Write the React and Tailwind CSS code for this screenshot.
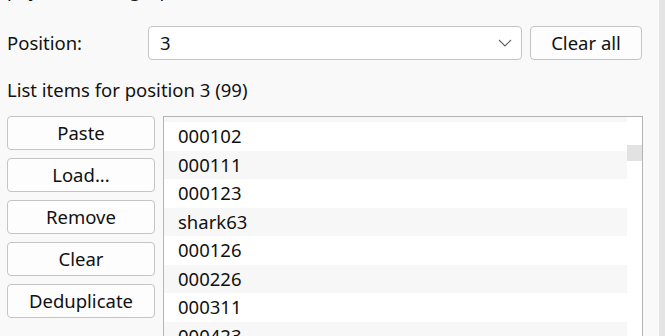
const ITEMS = ["000102", "000111", "000123", "shark63", "000126", "000226", "000311", "000423"]

const BUTTONS = ["Paste", "Load...", "Remove", "Clear", "Deduplicate"]

function App() {
  return (
    <div
      className="flex w-[665px] h-[336px] overflow-hidden bg-[#f9f9f9] text-[18.5px] text-[#111]"
      style={{ fontFamily: '"Noto Sans", "Open Sans", sans-serif' }}
    >
      <div className="flex-1 flex flex-col px-[7px]">
        {/* cut-off description line */}
        <div className="shrink-0 -mt-[20px] h-[20px] leading-[19.5px] whitespace-nowrap">
          payload settings, position
        </div>

        {/* Position row */}
        <div className="shrink-0 mt-[26px] flex items-center h-[34px]">
          <div className="w-[141px] leading-[26px]">Position:</div>
          <div className="w-[374px] h-[34px] flex items-center justify-between bg-white border border-[#c4c4c4] rounded-[4px] pl-[11px] pr-[9px]">
            <span className="leading-[26px]">3</span>
            <svg width="14" height="8" viewBox="0 0 14 8" fill="none">
              <path d="M1 1L7 7L13 1" stroke="#5f5f5f" strokeWidth="1.1" />
            </svg>
          </div>
          <button className="ml-[8px] w-[112px] h-[34px] bg-[#fdfdfd] border border-[#c4c4c4] rounded-[4px] leading-[26px]">
            Clear all
          </button>
        </div>

        <div className="shrink-0 mt-[17px] leading-[26px]">List items for position 3 (99)</div>

        {/* Buttons + list */}
        <div className="shrink-0 mt-[13px] flex gap-[8px]">
          <div className="w-[148px] flex flex-col gap-[8px]">
            {BUTTONS.map((b) => (
              <button
                key={b}
                className="h-[34px] bg-[#fdfdfd] border border-[#c4c4c4] rounded-[4px] leading-[26px]"
              >
                {b}
              </button>
            ))}
          </div>

          <div className="w-[480px] h-[260px] flex bg-white border border-[#b4b4b4] border-b-0 overflow-hidden">
            <div className="flex-1 flex flex-col">
              <div className="h-[5px] bg-[#f7f7f7] shrink-0" />
              {ITEMS.map((it, i) => (
                <div
                  key={it}
                  className={`h-[28.5px] shrink-0 flex items-center pl-[14px] leading-[26px] ${i % 2 === 1 ? "bg-[#f7f7f7]" : "bg-white"}`}
                >
                  {it}
                </div>
              ))}
            </div>
            <div className="w-[15px] pt-[28px]">
              <div className="h-[16px] bg-[#e2e2e2]" />
            </div>
          </div>
        </div>
      </div>
      <div className="w-[6px] bg-[#e4e4e4]" />
    </div>
  )
}

export default App
